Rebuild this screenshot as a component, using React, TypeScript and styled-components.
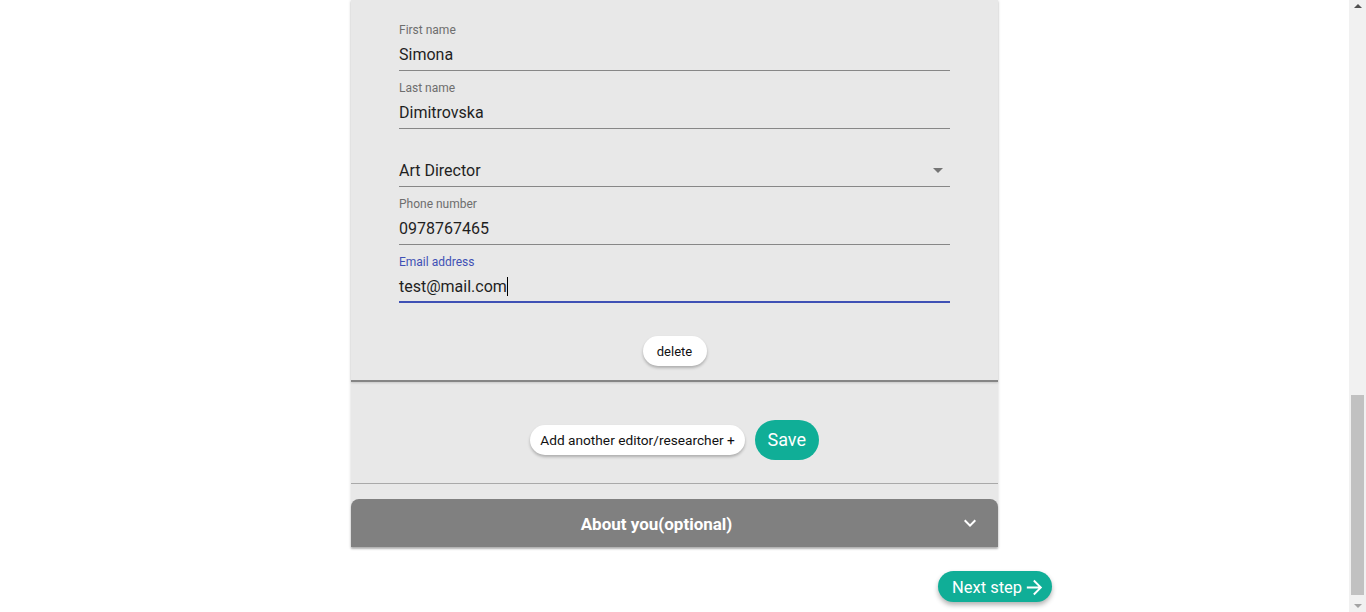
import React from "react";
import styled, { createGlobalStyle } from "styled-components";

const Global = createGlobalStyle`
  html, body { margin: 0; padding: 0; height: 612px; overflow: hidden; background: #fff; }
  body { font-family: Roboto, "Liberation Sans", Arial, sans-serif; }
  * { box-sizing: border-box; }
`;

const Screen = styled.div`
  display: flex;
  width: 1366px;
  height: 612px;
`;

const Main = styled.main`
  flex: 1;
  display: flex;
  flex-direction: column;
  align-items: center;
`;

const Panel = styled.div`
  width: 647px;
  background: #e8e8e8;
  box-shadow: 0 1px 3px rgba(0, 0, 0, 0.18);
  display: flex;
  flex-direction: column;
`;

const FormSection = styled.section`
  padding: 22px 48px 14px;
  display: flex;
  flex-direction: column;
  gap: 9px;
  border-bottom: 2px solid #858585;
  box-shadow: 0 1px 2px rgba(0, 0, 0, 0.15);
`;

const Field = styled.div`
  display: flex;
  flex-direction: column;
  height: 49px;
`;

const Label = styled.label<{ $focused?: boolean }>`
  height: 16px;
  padding-top: 1px;
  font-size: 12px;
  line-height: 14px;
  color: ${(p) => (p.$focused ? "#3f51b5" : "#6e6e6e")};
`;

const InputBox = styled.div<{ $focused?: boolean }>`
  position: relative;
  flex: 1;
  display: flex;
  align-items: flex-start;
  padding-top: 7px;
  font-size: 16px;
  line-height: 19px;
  color: #1f1f1f;
  border-bottom: ${(p) => (p.$focused ? "2px solid #3f51b5" : "1px solid #878787")};
`;

const Caret = styled.span`
  display: inline-block;
  width: 1px;
  height: 19px;
  background: #000;
  vertical-align: top;
`;

const DropIcon = styled.svg`
  position: absolute;
  right: 0;
  top: 4px;
  width: 24px;
  height: 24px;
  fill: #757575;
`;

const Centered = styled.div<{ $top: number }>`
  display: flex;
  justify-content: center;
  align-items: center;
  gap: 10px;
  margin-top: ${(p) => p.$top}px;
`;

const PillButton = styled.button`
  height: 30px;
  padding: 0 10px;
  border: none;
  border-radius: 15px;
  background: #fff;
  color: #111;
  font-family: Roboto, "Liberation Sans", Arial, sans-serif;
  font-size: 13.7px;
  box-shadow: 0 2px 3px rgba(0, 0, 0, 0.25);
  cursor: pointer;
`;

const DeleteButton = styled(PillButton)`
  width: 64px;
  padding: 0;
  font-size: 13px;
`;

const TealButton = styled.button`
  border: none;
  background: #10ae97;
  color: #fff;
  font-family: Roboto, "Liberation Sans", Arial, sans-serif;
  cursor: pointer;
  display: flex;
  align-items: center;
  justify-content: center;
`;

const SaveButton = styled(TealButton)`
  width: 64px;
  height: 40px;
  border-radius: 20px;
  font-size: 18px;
`;

const ActionSection = styled.section`
  height: 102px;
  display: flex;
  justify-content: center;
  align-items: center;
  gap: 10px;
  border-bottom: 1px solid #a9a9a9;
  padding-top: 14px;
`;

const Spacer = styled.div`
  height: 15px;
`;

const AccordionHeader = styled.div`
  height: 48px;
  background: #808080;
  border-radius: 8px 8px 0 0;
  display: flex;
  align-items: center;
  padding: 0 16px;
  color: #fff;
  box-shadow: 0 2px 2px rgba(0, 0, 0, 0.22);
`;

const AccordionTitle = styled.div`
  flex: 1;
  text-align: center;
  font-weight: 700;
  font-size: 17px;
  padding-top: 2px;
  margin-right: 12px;
`;

const Chevron = styled.svg`
  width: 24px;
  height: 24px;
  fill: #fff;
  margin-top: -1px;
`;

const Footer = styled.div`
  width: 755px;
  display: flex;
  justify-content: flex-end;
  margin-top: 24px;
`;

const NextButton = styled(TealButton)`
  width: 114px;
  height: 31px;
  border-radius: 16px;
  font-size: 16.5px;
  gap: 1px;
  padding: 1px 0 0 8px;
  box-shadow: 0 3px 5px rgba(0, 0, 0, 0.3);
  svg { width: 23px; height: 23px; fill: #fff; }
`;

const Scrollbar = styled.div`
  width: 17px;
  background: #f1f1f1;
  display: flex;
  flex-direction: column;
  align-items: center;
`;

const Arrow = styled.div<{ $down?: boolean; $color: string }>`
  width: 0;
  height: 0;
  border-left: 4px solid transparent;
  border-right: 4px solid transparent;
  ${(p) =>
    p.$down
      ? `border-top: 4px solid ${p.$color};`
      : `border-bottom: 4px solid ${p.$color};`}
`;

const Track = styled.div`
  flex: 1;
  width: 100%;
  display: flex;
  flex-direction: column;
  justify-content: flex-end;
  align-items: center;
  padding: 6px 0 0;
`;

const Thumb = styled.div`
  width: 13px;
  height: 200px;
  background: #c1c1c1;
  margin-bottom: 5px;
`;

const ArrowCell = styled.div`
  height: 12px;
  display: flex;
  align-items: center;
  justify-content: center;
`;

type F = { label?: string; value: string; focused?: boolean; select?: boolean };

const fields: F[] = [
  { label: "First name", value: "Simona" },
  { label: "Last name", value: "Dimitrovska" },
  { label: "", value: "Art Director", select: true },
  { label: "Phone number", value: "0978767465" },
  { label: "Email address", value: "test@mail.com", focused: true },
];

export default function App() {
  return (
    <>
      <Global />
      <Screen>
        <Main>
          <Panel>
            <FormSection>
              {fields.map((f) => (
                <Field key={f.value}>
                  <Label $focused={f.focused}>{f.label}</Label>
                  <InputBox $focused={f.focused}>
                    <span>
                      {f.value}
                      {f.focused && <Caret />}
                    </span>
                    {f.select && (
                      <DropIcon viewBox="0 0 24 24">
                        <path d="M7 10l5 5 5-5z" />
                      </DropIcon>
                    )}
                  </InputBox>
                </Field>
              ))}
              <Centered $top={24}>
                <DeleteButton>delete</DeleteButton>
              </Centered>
            </FormSection>
            <ActionSection>
              <PillButton>Add another editor/researcher +</PillButton>
              <SaveButton>Save</SaveButton>
            </ActionSection>
            <Spacer />
            <AccordionHeader>
              <AccordionTitle>About you(optional)</AccordionTitle>
              <Chevron viewBox="0 0 24 24">
                <path d="M16.59 8.59L12 13.17 7.41 8.59 6 10l6 6 6-6z" />
              </Chevron>
            </AccordionHeader>
          </Panel>
          <Footer>
            <NextButton>
              Next step
              <svg viewBox="0 0 24 24">
                <path d="M12 4l-1.41 1.41L16.17 11H4v2h12.17l-5.58 5.59L12 20l8-8z" />
              </svg>
            </NextButton>
          </Footer>
        </Main>
        <Scrollbar>
          <ArrowCell>
            <Arrow $color="#505050" />
          </ArrowCell>
          <Track>
            <Thumb />
          </Track>
          <ArrowCell>
            <Arrow $down $color="#a3a3a3" />
          </ArrowCell>
        </Scrollbar>
      </Screen>
    </>
  );
}
